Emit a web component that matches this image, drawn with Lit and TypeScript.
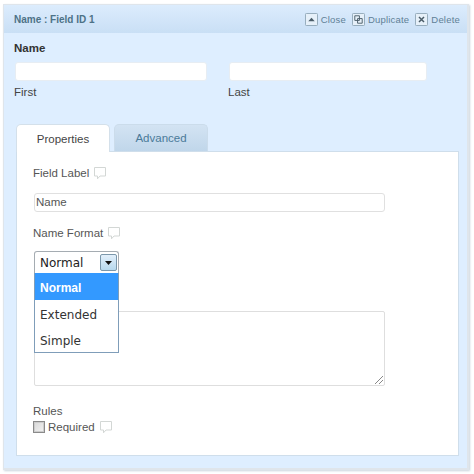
import { LitElement, html, css, svg } from "lit";
import { customElement } from "lit/decorators.js";

const bubble = html`<svg class="bubble" width="14" height="14" viewBox="0 0 14 14"><path d="M1.5 1.5h11v8.5H7l-2.5 2.8V10h-3z" fill="#fff" stroke="#d3d7d5" stroke-width="1"/></svg>`;

const boxIcon = (inner: unknown) => html`<svg class="tool" width="13" height="13" viewBox="0 0 14 14"><rect x=".5" y=".5" width="13" height="13" rx="1" fill="#e6f0f9" stroke="#8fa5b5"/>${inner}</svg>`;

@customElement("app-root")
export class AppRoot extends LitElement {
  static styles = css`
    :host { display: block; width: 474px; height: 474px; background: #fff; font-family: "Liberation Sans", Arial, sans-serif; overflow: hidden; }
    .panel { box-sizing: border-box; width: 466px; height: 466px; margin: 4px 0 0 3px; background: #deeeff; border: 1px solid #dfe5eb; border-width: 1px 2px 2px 1px; box-shadow: 1px 1px 2px #c9d3dc; }
    .head { height: 28px; box-sizing: border-box; display: flex; align-items: center; justify-content: space-between; padding: 0 1px 0 10px; background: linear-gradient(#dcecfd, #c9dff5); }
    .title { font-size: 10px; font-weight: bold; color: #4d7287; }
    .tools { display: flex; align-items: center; font-size: 9.5px; color: #5f8096; letter-spacing: .2px; }
    .tools span { margin: 0 6px 0 3px; }
    .tool { display: block; }
    .body { padding: 8px 0 0 10px; }
    .name { font-size: 11.5px; font-weight: bold; color: #333; line-height: 14px; }
    .names { display: flex; gap: 22px; margin: 7px 0 0 1px; }
    .name-col { display: flex; flex-direction: column; }
    .name-col label { font-size: 11.5px; color: #444; line-height: 14px; margin: 4px 0 0 -1px; }
    .w1 { width: 192px; }
    .w2 { width: 198px; }
    .inp { box-sizing: border-box; height: 19px; background: #fff; border: 1px solid #e7edf3; border-radius: 3px; }
    .tabs { display: flex; gap: 4px; margin: 25px 0 0 2px; height: 27px; align-items: flex-end; }
    .tab { box-sizing: border-box; width: 94px; height: 27px; border-radius: 5px 5px 0 0; font-size: 11.5px; display: flex; align-items: center; justify-content: center; }
    .tab.on { background: #fff; color: #444; position: relative; height: 28px; margin-bottom: -1px; z-index: 1; border: 1px solid #d4e0ea; border-bottom: 0; }
    .tab.off { background: linear-gradient(#d3e3f3, #c0d6ea); color: #4a7a99; border: 1px solid #cbdceb; border-bottom: 0; }
    .content { box-sizing: border-box; width: 443px; height: 305px; margin-left: 2px; background: #fff; border: 1px solid #cfdeeb; padding: 13px 0 0 17px; position: relative; }
    .lab { display: flex; align-items: center; gap: 4px; font-size: 11.5px; color: #555; height: 16px; margin-left: -1px; }
    .text { box-sizing: border-box; width: 351px; height: 19px; margin: 12px 0 13px 0; border: 1px solid #e0e0e0; border-radius: 3px; font-size: 11.5px; color: #555; padding: 0 0 0 1px; line-height: 17px; }
    .select { box-sizing: border-box; width: 85px; height: 22px; margin: 10px 0 0 0; border: 1px solid #a5acb2; border-bottom: 0; border-radius: 3px 3px 0 0; display: flex; align-items: center; justify-content: space-between; padding: 0 1px 0 5px; font-family: "DejaVu Sans", sans-serif; font-size: 12px; color: #222; }
    .arrow { display: block; }
    .menu { position: absolute; left: 17px; top: 121px; box-sizing: border-box; width: 85px; height: 80px; background: #fff; border: 1px solid #7f9db9; border-top: 0; z-index: 2; font-family: "DejaVu Sans", sans-serif; font-size: 12px; color: #333; }
    .item { height: 26.5px; line-height: 30px; padding-left: 5px; }
    .item.sel { background: #3399ff; color: #fff; font-family: "Liberation Sans", Arial, sans-serif; font-weight: bold; }
    .area { box-sizing: border-box; width: 351px; height: 75px; margin: 38px 0 0 0; border: 1px solid #dedede; border-radius: 2px; position: relative; }
    .grip { position: absolute; right: 0; bottom: 0; display: block; }
    .rules { font-size: 11.5px; color: #555; line-height: 14px; margin: 18px 0 0 -1px; }
    .req { display: flex; align-items: center; font-size: 11.5px; color: #555; height: 16px; margin: 1px 0 0 -1px; }
    .check { box-sizing: border-box; width: 12px; height: 12px; border: 1px solid #8a8a8a; background: linear-gradient(135deg, #d8d8d8, #f2f2f2); margin-right: 3px; box-shadow: inset 0 0 0 1px #ccc; }
    .req .bubble { margin-left: 4px; }
  `;

  render() {
    return html`<div class="panel">
      <div class="head">
        <div class="title">Name : Field ID 1</div>
        <div class="tools">
          ${boxIcon(svg`<path d="M3.5 9 7 5l3.5 4z" fill="#4a5c68"/>`)}<span>Close</span>
          ${boxIcon(svg`<path d="M3 3h5v5H3zM6 6h5v5H6z" fill="none" stroke="#4a5c68"/>`)}<span>Duplicate</span>
          ${boxIcon(svg`<path d="m4.3 4.3 5.4 5.4m0-5.4-5.4 5.4" stroke="#4a5c68" stroke-width="1.6"/>`)}<span>Delete</span>
        </div>
      </div>
      <div class="body">
        <div class="name">Name</div>
        <div class="names">
          <div class="name-col"><div class="inp w1"></div><label>First</label></div>
          <div class="name-col"><div class="inp w2"></div><label>Last</label></div>
        </div>
        <div class="tabs"><div class="tab on">Properties</div><div class="tab off">Advanced</div></div>
        <div class="content">
          <div class="lab">Field Label ${bubble}</div>
          <div class="text">Name</div>
          <div class="lab">Name Format ${bubble}</div>
          <div class="select">Normal
            <svg class="arrow" width="17" height="17" viewBox="0 0 17 17"><defs><linearGradient id="g" x1="0" y1="0" x2="0" y2="1"><stop offset="0" stop-color="#e4f0fb"/><stop offset="1" stop-color="#b5d8ee"/></linearGradient></defs><rect x=".5" y=".5" width="16" height="16" rx="1.5" fill="url(#g)" stroke="#7b97ab"/><path d="M5 7h7l-3.5 4z" fill="#111"/></svg>
          </div>
          <div class="menu">
            <div class="item sel">Normal</div>
            <div class="item">Extended</div>
            <div class="item">Simple</div>
          </div>
          <div class="area"><svg class="grip" width="10" height="10" viewBox="0 0 10 10"><path d="M1 9 9 1M5 9l4-4" stroke="#888" stroke-width="1"/></svg></div>
          <div class="rules">Rules</div>
          <div class="req"><div class="check"></div>Required ${bubble}</div>
        </div>
      </div>
    </div>`;
  }
}
